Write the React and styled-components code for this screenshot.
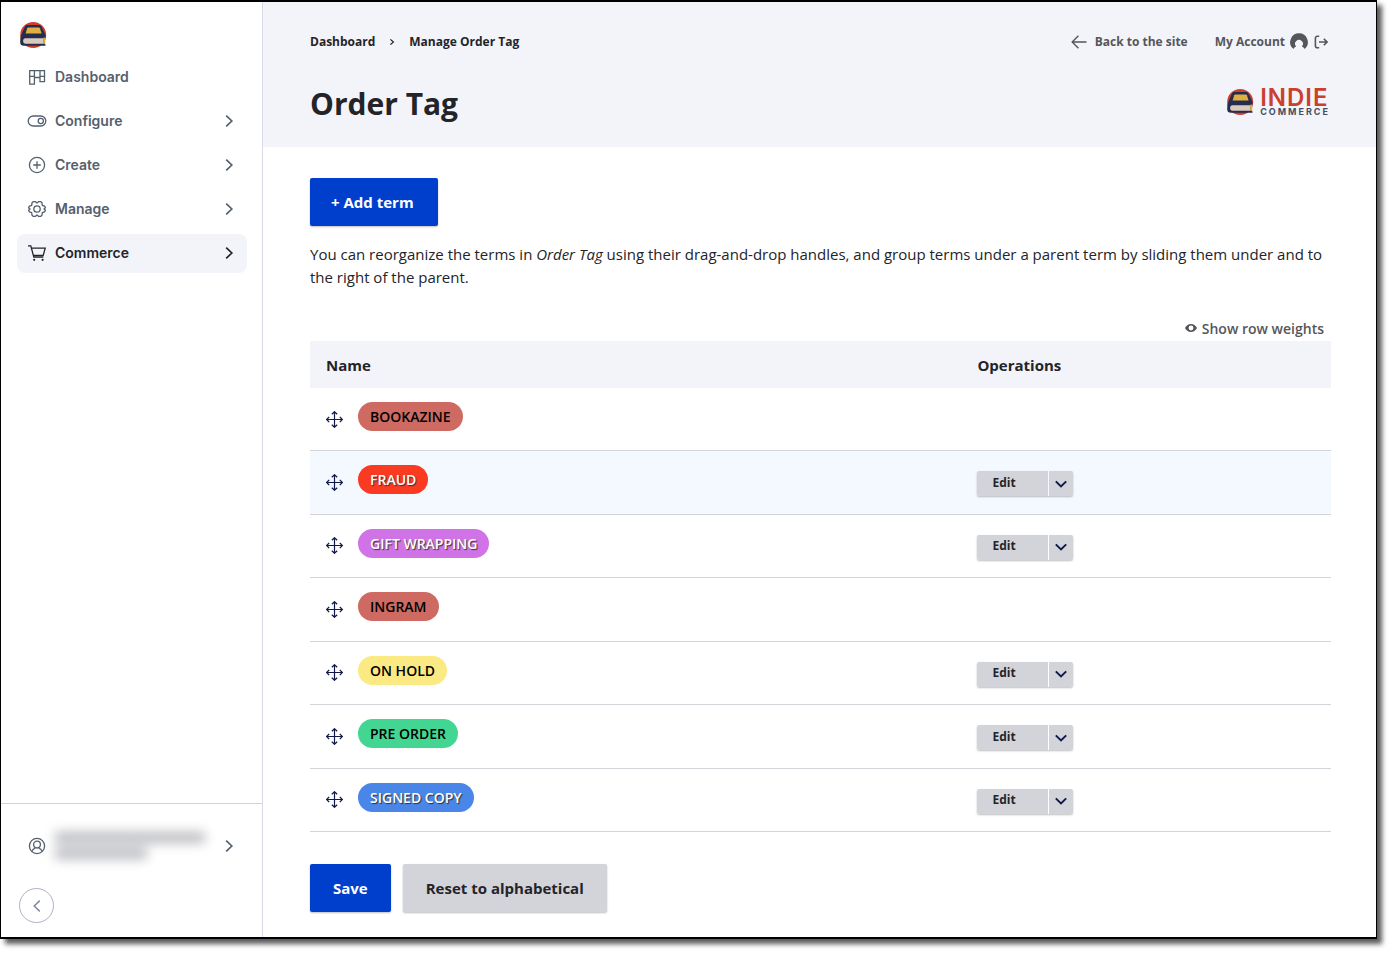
import React from "react";
import styled, { createGlobalStyle } from "styled-components";

const GlobalStyle = createGlobalStyle`
  *, *::before, *::after { box-sizing: border-box; }
  body {
    margin: 0;
    background: #fff;
    color: #232429;
    font: 15px/23px "Open Sans", "Noto Sans", sans-serif;
  }
  button { font: inherit; color: inherit; margin: 0; border: 0; cursor: pointer; }
  a { color: inherit; text-decoration: none; }
  svg { display: block; flex: none; }
`;

const Page = styled.div`
  display: flex;
  min-height: 100vh;
  padding: 0 15px 15px 0;
`;

const Frame = styled.div`
  display: flex;
  flex: 1;
  min-width: 0;
  border: 1px solid #000;
  border-width: 2px 1px 2px 1px;
  background: #fff;
  box-shadow: 5px 5px 5px rgba(0, 0, 0, 0.65);
`;

const Sidebar = styled.aside`
  display: flex;
  flex-direction: column;
  flex: none;
  width: 262px;
  border-right: 1px solid #d8dae8;
  font-family: Inter, sans-serif;
`;

const BrandLink = styled.a`
  align-self: flex-start;
  padding: 19px 18px 0;
`;

const Menu = styled.ul`
  display: flex;
  flex-direction: column;
  gap: 5px;
  flex: 1;
  margin: 0;
  padding: 9px 15px 9px 16px;
  list-style: none;
`;

const MenuItem = styled.a`
  display: flex;
  align-items: center;
  gap: 8px;
  height: 39px;
  padding: 0 12px 2px 10px;
  border-radius: 8px;
  background: ${(p) => (p.$active ? "#f3f4f9" : "transparent")};
  color: ${(p) => (p.$active ? "#232429" : "#55606e")};
  font-size: 14px;
  font-weight: 600;
  line-height: 20px;
`;

const MenuLabel = styled.span`
  flex: 1;
`;

const SidebarFooter = styled.div`
  display: flex;
  flex-direction: column;
  gap: 18px;
  padding: 17px 15px 14px 16px;
  border-top: 1px solid #d0d2dc;
`;

const AccountButton = styled.button`
  display: flex;
  align-items: center;
  gap: 8px;
  height: 49px;
  padding: 0 12px 0 10px;
  background: none;
  color: #55606e;
`;

const HiddenName = styled.span`
  display: flex;
  flex-direction: column;
  flex: 1;
  gap: 5px;
  filter: blur(6px);
`;

const NameBar = styled.span`
  width: ${(p) => p.$width};
  height: 11px;
  background: #b9babf;
`;

const CollapseButton = styled.button`
  display: grid;
  place-items: center;
  width: 35px;
  height: 35px;
  margin-left: 2px;
  padding: 0;
  border: 1px solid #adb3c8 !important;
  border-radius: 50%;
  background: #fff;
  color: #828aa5;
`;

const Main = styled.main`
  flex: 1;
  min-width: 0;
`;

const Header = styled.header`
  padding: 30px 46px 24px 47px;
  background: #f3f4f9;
`;

const TopBar = styled.div`
  display: flex;
  justify-content: space-between;
  align-items: center;
  height: 20px;
  padding-right: 2px;
  font-size: 12px;
  font-weight: 700;
  line-height: 20px;
`;

const Breadcrumb = styled.ol`
  display: flex;
  align-items: center;
  gap: 14px;
  margin: 0;
  padding: 0;
  list-style: none;
`;

const Crumb = styled.li`
  display: flex;
  align-items: center;
  gap: 14px;
`;

const UserLinks = styled.nav`
  display: flex;
  align-items: center;
  gap: 27px;
  color: #55565b;
`;

const IconLink = styled.a`
  display: flex;
  align-items: center;
  gap: ${(p) => p.$gap};
`;

const LinkGroup = styled.div`
  display: flex;
  align-items: center;
  gap: 6px;
`;

const TitleBar = styled.div`
  display: flex;
  justify-content: space-between;
  align-items: center;
  margin-top: 33px;
`;

const Title = styled.h1`
  margin: 0;
  font-size: 30px;
  font-weight: 700;
  line-height: 38px;
`;

const Logo = styled.a`
  display: flex;
  align-items: center;
  gap: 6px;
  padding-bottom: 4px;
  font-family: Inter, sans-serif;
`;

const LogoWords = styled.span`
  display: flex;
  flex-direction: column;
`;

const LogoName = styled.span`
  color: #cb3f2d;
  font-size: 24px;
  font-weight: 600;
  line-height: 19px;
  letter-spacing: 1px;
`;

const LogoSub = styled.span`
  color: #454e61;
  font-size: 9px;
  font-weight: 700;
  line-height: 10px;
  letter-spacing: 2px;
`;

const Content = styled.div`
  padding: 31px 45px 24px 47px;
`;

const ActionButton = styled.button`
  display: inline-flex;
  align-items: center;
  height: 48px;
  padding: ${(p) => p.$padding};
  border-radius: 2px;
  background: ${(p) => (p.$primary ? "#003ecc" : "#d3d4d9")};
  color: ${(p) => (p.$primary ? "#fff" : "#232429")};
  font-weight: 700;
  box-shadow: 0 1px 2px rgba(0, 0, 0, 0.25);
`;

const Help = styled.p`
  margin: 17px 0 27px;
`;

const WeightsRow = styled.div`
  display: flex;
  justify-content: flex-end;
  padding: 0 7px 1px 0;
`;

const WeightsButton = styled.button`
  display: flex;
  align-items: center;
  gap: 5px;
  height: 24px;
  padding: 0;
  background: none;
  color: #55565b;
  font-size: 14px;
  font-weight: 600;
`;

const TermTable = styled.table`
  width: 100%;
  height: 491px;
  border-collapse: separate;
  border-spacing: 0;
`;

const HeadCell = styled.th`
  width: ${(p) => p.$width};
  height: 47px;
  padding: 2px 16px 0;
  background: #f3f4f9;
  font-weight: 700;
  text-align: left;
`;

const TermRow = styled.tr`
  background: ${(p) => (p.$hovered ? "#f4f8ff" : "#fff")};
`;

const Cell = styled.td`
  padding: ${(p) => p.$padding};
  border-bottom: 1px solid #d3d4d9;
  vertical-align: top;
`;

const TermName = styled.div`
  display: flex;
  align-items: center;
  gap: 15px;
`;

const DragHandle = styled.button`
  padding: 5px 0 0;
  background: none;
  color: #10194a;
  cursor: move;
`;

const Tag = styled.a`
  height: 29px;
  padding: 0 12px;
  border-radius: 15px;
  background: ${(p) => p.$color};
  color: ${(p) => (p.$light ? "#fff" : "#000")};
  font-size: 14px;
  font-weight: 600;
  line-height: 29px;
  text-shadow: ${(p) => (p.$light ? "1px 1px 1px #333" : "none")};
`;

const DropButton = styled.div`
  display: inline-flex;
  gap: 1px;
  height: 25px;
  vertical-align: top;
  border-radius: 2px;
  box-shadow: 0 1px 2px rgba(0, 0, 0, 0.25);
`;

const EditButton = styled.button`
  width: 71px;
  padding: 0 0 2px 15px;
  border-radius: 2px 0 0 2px;
  background: #d3d4d9;
  font-size: 12px;
  font-weight: 700;
  line-height: 20px;
  text-align: left;
`;

const ToggleButton = styled.button`
  display: grid;
  place-items: center;
  width: 24px;
  padding: 0;
  border-radius: 0 2px 2px 0;
  background: #d3d4d9;
  color: #10194a;
`;

const FormActions = styled.div`
  display: flex;
  gap: 12px;
  margin-top: 32px;
`;

const Stroke = ({ size = 20, width = 1.3, box = 20, children }) => (
  <svg
    width={size}
    height={size}
    viewBox={`0 0 ${box} ${box}`}
    fill="none"
    stroke="currentColor"
    strokeWidth={width}
    aria-hidden="true"
  >
    {children}
  </svg>
);

const BoardIcon = () => (
  <Stroke>
    <path d="M2.7 3.6h14.8v11H13v-4.1H7.4v6.6H2.7zM7.4 3.6v6.9M13 3.6v6.9M2.7 9.3h4.7M13 9.3h4.5" />
  </Stroke>
);

const ToggleIcon = () => (
  <Stroke>
    <rect x="1.2" y="5" width="17.6" height="10" rx="5" />
    <circle cx="13.8" cy="10" r="2.6" />
  </Stroke>
);

const PlusIcon = () => (
  <Stroke>
    <circle cx="10" cy="10" r="7.6" />
    <path d="M10 6.2v7.6M6.2 10h7.6" />
  </Stroke>
);

const GearIcon = () => (
  <Stroke>
    <circle cx="10" cy="10" r="3.2" />
    <path
      strokeLinejoin="round"
      d="M6.4 2.6h1.8L10 4l1.800-1.400h1.800L15 3.800l.3 2.500 2.200.9.900 1.500L17 10l1.400 1.300-.9 1.500-2.200.9-.3 2.500-1.400 1.200h-1.800L10 16l-1.800 1.400H6.400L5 16.200l-.3-2.500-2.200-.9-.9-1.500L3 10 1.600 8.700l.9-1.500 2.200-.9L5 3.800z"
    />
  </Stroke>
);

const CartIcon = () => (
  <Stroke>
    <path d="M1 2.8h2.8l3 11.2h9.6M4.8 5.2h13.4l-2 7.2H6.7" />
    <circle cx="7.2" cy="16.8" r="1.1" fill="currentColor" stroke="none" />
    <circle cx="15.6" cy="16.8" r="1.1" fill="currentColor" stroke="none" />
  </Stroke>
);

const UserIcon = () => (
  <Stroke>
    <circle cx="10" cy="10" r="7.6" />
    <circle cx="10" cy="8.6" r="3.4" />
    <path d="M4.8 15.4c.8-2 2-3 3.4-3.3M15.2 15.4c-.8-2-2-3-3.4-3.3" />
  </Stroke>
);

const ChevronRight = () => (
  <Stroke size={12} box={12} width={1.7}>
    <path d="M3.2 0.6l5.6 5.4-5.6 5.4" />
  </Stroke>
);

const ChevronLeft = () => (
  <Stroke size={12} box={12} width={1.5}>
    <path d="M8.8 0.6L3.2 6l5.6 5.4" />
  </Stroke>
);

const CrumbChevron = () => (
  <Stroke size={6} box={6} width={1.2}>
    <path d="M1.4 0.4L4.4 3l-3 2.6" />
  </Stroke>
);

const ChevronDown = () => (
  <Stroke size={12} box={12} width={2}>
    <path d="M0.8 3.4L6 8.4l5.2-5" />
  </Stroke>
);

const ArrowLeft = () => (
  <Stroke size={16} box={16} width={1.4}>
    <path d="M15.5 8H1.2M7.4 1.8L1.2 8l6.2 6.2" />
  </Stroke>
);

const AvatarIcon = () => (
  <svg width="18" height="18" viewBox="0 0 18 18" aria-hidden="true">
    <path
      fill="currentColor"
      fillRule="evenodd"
      d="M9 .3a8.8 8.8 0 0 1 5.600 15.600c-.5-1.200-1.400-2-2.700-2.500a3.900 3.900 0 1 0-5.800 0c-1.300.5-2.200 1.300-2.700 2.500A8.8 8.8 0 0 1 9 .3z"
    />
  </svg>
);

const SignOutIcon = () => (
  <Stroke size={14} box={14} width={1.6}>
    <path d="M5.2 1.2H3.4A2 2 0 0 0 1.4 3.2v7.6a2 2 0 0 0 2 2h1.8M5 7h8M9.8 3.8L13 7l-3.2 3.2" />
  </Stroke>
);

const EyeIcon = () => (
  <svg width="12" height="8" viewBox="0 0 12 8" aria-hidden="true">
    <path
      fill="currentColor"
      fillRule="evenodd"
      d="M6 0c2.900 0 5 1.700 6 4-1 2.300-3.100 4-6 4S1 6.300 0 4c1-2.300 3.100-4 6-4zm0 1.600a2.400 2.400 0 1 0 0 4.800 2.400 2.400 0 0 0 0-4.800z"
    />
  </svg>
);

const MoveIcon = () => (
  <Stroke size={17} box={17} width={1.2}>
    <path d="M8.500 0.800v15.400M0.800 8.500h15.400M5.800 3.200L8.500 0.700l2.700 2.500M5.800 13.800l2.700 2.500 2.700-2.500M3.200 5.800L0.700 8.500l2.500 2.700M13.800 5.800l2.500 2.700-2.500 2.700" />
  </Stroke>
);

const BookBadge = () => (
  <svg width="28" height="28" viewBox="0 0 28 28" aria-hidden="true">
    <circle cx="14.200" cy="14" r="13" fill="#cb3f2d" />
    <path d="M8.500 4h11.500c1.200 0 2 .5 2.400 1.600L26.500 14v3h-.8v6.200h.8v1.600H5c-2.500 0-3.800-1.300-3.800-3.600 0-3.500.4-5.700 1.500-8.200L6 5.600C6.400 4.500 7.200 4 8.500 4z" fill="#262c4e" />
    <path d="M9.300 6.500h10.400c.6 0 1 .3 1.200.8l1.700 5.200H6.600l1.600-5.200c.2-.5.500-.8 1.100-.8z" fill="#deb041" />
    <path d="M6.500 17.300H24.500V22.800H6.500c-3.200 0-3.200-5.500 0-5.500z" fill="#d9cac0" />
    <path d="M24.300 16.600h2v6.200h-2z" fill="#deb041" />
  </svg>
);

const menu = [
  { label: "Dashboard", Icon: BoardIcon },
  { label: "Configure", Icon: ToggleIcon, nested: true },
  { label: "Create", Icon: PlusIcon, nested: true },
  { label: "Manage", Icon: GearIcon, nested: true },
  { label: "Commerce", Icon: CartIcon, nested: true, active: true },
];

const terms = [
  { name: "BOOKAZINE", color: "#cf6a62" },
  { name: "FRAUD", color: "#fa3b22", light: true, editable: true, hovered: true },
  { name: "GIFT WRAPPING", color: "#cf73e6", light: true, editable: true },
  { name: "INGRAM", color: "#cf6a62" },
  { name: "ON HOLD", color: "#fbe983", editable: true },
  { name: "PRE ORDER", color: "#43d692", editable: true },
  { name: "SIGNED COPY", color: "#4a86e8", light: true, editable: true },
];

export default function App() {
  return (
    <Page>
      <GlobalStyle />
      <Frame>
        <Sidebar>
          <BrandLink href="#" aria-label="Home">
            <BookBadge />
          </BrandLink>
          <Menu>
            {menu.map(({ label, Icon, nested, active }) => (
              <li key={label}>
                <MenuItem href="#" $active={active}>
                  <Icon />
                  <MenuLabel>{label}</MenuLabel>
                  {nested && <ChevronRight />}
                </MenuItem>
              </li>
            ))}
          </Menu>
          <SidebarFooter>
            <AccountButton aria-label="Account">
              <UserIcon />
              <HiddenName>
                <NameBar $width="150px" />
                <NameBar $width="92px" />
              </HiddenName>
              <ChevronRight />
            </AccountButton>
            <CollapseButton aria-label="Collapse sidebar">
              <ChevronLeft />
            </CollapseButton>
          </SidebarFooter>
        </Sidebar>
        <Main>
          <Header>
            <TopBar>
              <Breadcrumb>
                <Crumb>
                  <a href="#">Dashboard</a>
                  <CrumbChevron />
                </Crumb>
                <Crumb>
                  <a href="#">Manage Order Tag</a>
                </Crumb>
              </Breadcrumb>
              <UserLinks>
                <IconLink href="#" $gap="8px">
                  <ArrowLeft />
                  Back to the site
                </IconLink>
                <LinkGroup>
                  <IconLink href="#" $gap="5px">
                    My Account
                    <AvatarIcon />
                  </IconLink>
                  <a href="#" aria-label="Log out">
                    <SignOutIcon />
                  </a>
                </LinkGroup>
              </UserLinks>
            </TopBar>
            <TitleBar>
              <Title>Order Tag</Title>
              <Logo href="#">
                <BookBadge />
                <LogoWords>
                  <LogoName>INDIE</LogoName>
                  <LogoSub>COMMERCE</LogoSub>
                </LogoWords>
              </Logo>
            </TitleBar>
          </Header>
          <Content>
            <ActionButton $primary $padding="0 24px 0 21px">
              + Add term
            </ActionButton>
            <Help>
              You can reorganize the terms in <em>Order Tag</em> using their drag-and-drop handles, and
              group terms under a parent term by sliding them under and to the right of the parent.
            </Help>
            <WeightsRow>
              <WeightsButton>
                <EyeIcon />
                Show row weights
              </WeightsButton>
            </WeightsRow>
            <TermTable>
              <thead>
                <tr>
                  <HeadCell>Name</HeadCell>
                  <HeadCell $width="36.2%">Operations</HeadCell>
                </tr>
              </thead>
              <tbody>
                {terms.map((t) => (
                  <TermRow key={t.name} $hovered={t.hovered}>
                    <Cell $padding="14px 16px 19px">
                      <TermName>
                        <DragHandle aria-label={`Move ${t.name}`}>
                          <MoveIcon />
                        </DragHandle>
                        <Tag href="#" $color={t.color} $light={t.light}>
                          {t.name}
                        </Tag>
                      </TermName>
                    </Cell>
                    <Cell $padding="20px 16px 0">
                      {t.editable && (
                        <DropButton>
                          <EditButton>Edit</EditButton>
                          <ToggleButton aria-label={`More actions for ${t.name}`}>
                            <ChevronDown />
                          </ToggleButton>
                        </DropButton>
                      )}
                    </Cell>
                  </TermRow>
                ))}
              </tbody>
            </TermTable>
            <FormActions>
              <ActionButton $primary $padding="0 23px">
                Save
              </ActionButton>
              <ActionButton $padding="0 23px">Reset to alphabetical</ActionButton>
            </FormActions>
          </Content>
        </Main>
      </Frame>
    </Page>
  );
}
